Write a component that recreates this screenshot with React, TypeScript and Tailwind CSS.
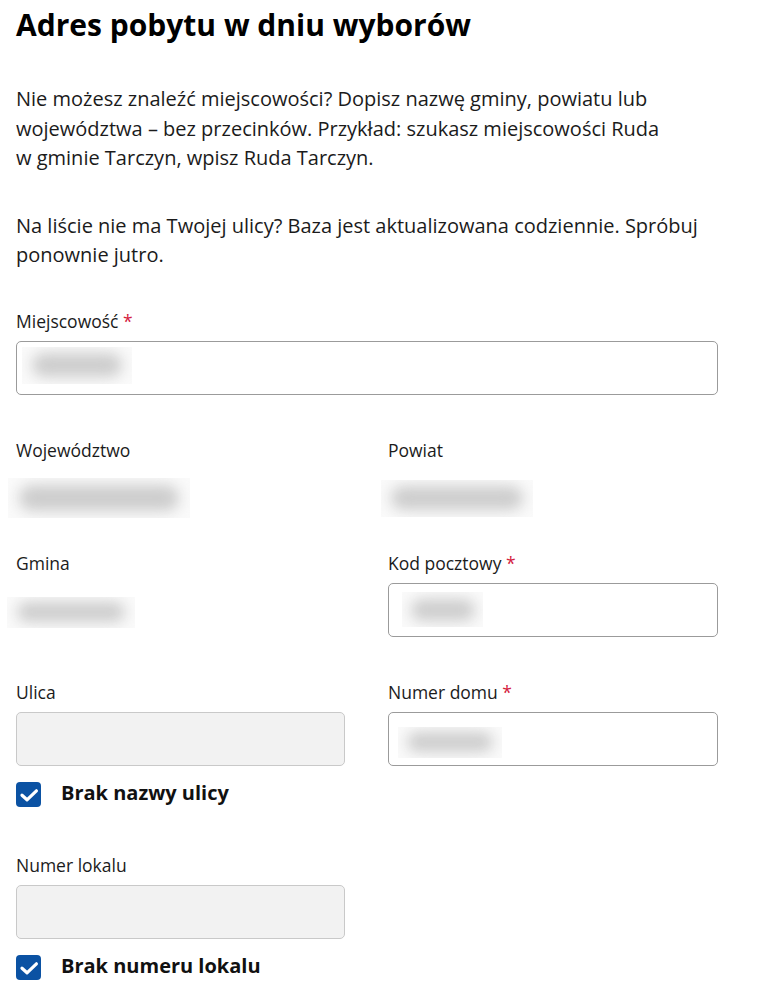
import type { ReactNode } from "react";

function Required() {
  return <span className="text-[#d4213d]"> *</span>;
}

function Label({ children }: { children: ReactNode }) {
  return <p className="text-[17.5px] leading-[24px] text-[#1b1b1b]">{children}</p>;
}

// redacted value, drawn as a soft grey smudge
function Blob({ w, h, pill }: { w: number; h: number; pill: string }) {
  return (
    <div className="flex items-center justify-center overflow-hidden bg-[#fafafa]" style={{ width: w, height: h }}>
      <div className={`rounded-full bg-[#cdcdcd] blur-[7px] ${pill}`} />
    </div>
  );
}

function TextInput({ children }: { children?: ReactNode }) {
  return (
    <div className="mt-[8px] flex h-[54px] items-center rounded-[5px] border border-[#9b9b9b] bg-white">
      {children}
    </div>
  );
}

function DisabledInput() {
  return <div className="mt-[8px] h-[54px] rounded-[5px] border border-[#c9c9c9] bg-[#f2f2f2]" />;
}

function Checked({ label }: { label: string }) {
  return (
    <div className="mt-[14px] flex items-start gap-[20px]">
      <span className="mt-[2px] flex h-[25px] w-[25px] shrink-0 rounded-[4px] bg-[#0b52a3]">
        <svg viewBox="0 0 25 25" className="h-[25px] w-[25px]" fill="none">
          <path d="M6 13.2l5 4.6 9.4-9" stroke="white" strokeWidth="3.2" strokeLinecap="round" strokeLinejoin="round" />
        </svg>
      </span>
      <span className="text-[20px] font-bold leading-[25px] text-[#111]">{label}</span>
    </div>
  );
}

export default function App() {
  return (
    <main
      className="min-h-screen bg-white px-4 pt-[7px] text-[#1b1b1b]"
      style={{ fontFamily: '"Open Sans", "Noto Sans", Arial, sans-serif' }}
    >
      <div className="w-[702px]">
        <h1 className="text-[30px] font-bold leading-[36px] text-black">Adres pobytu w dniu wyborów</h1>

        <p className="mt-[41px] text-[20px] leading-[29.5px]">
          Nie możesz znaleźć miejscowości? Dopisz nazwę gminy, powiatu lub województwa – bez przecinków. Przykład:
          szukasz miejscowości Ruda w&nbsp;gminie Tarczyn, wpisz Ruda Tarczyn.
        </p>
        <p className="mt-[38px] text-[20px] leading-[29px]">
          Na liście nie ma Twojej ulicy? Baza jest aktualizowana codziennie. Spróbuj ponownie jutro.
        </p>

        <div className="mt-[40px]">
          <Label>
            Miejscowość
            <Required />
          </Label>
          <TextInput>
            <div className="ml-[5px] -mt-[5px]">
              <Blob w={110} h={37} pill="h-[24px] w-[90px]" />
            </div>
          </TextInput>
        </div>

        <div className="mt-[43px] grid grid-cols-[329px_330px] gap-x-[43px] gap-y-[43px]">
          <div>
            <Label>Województwo</Label>
            <div className="mt-[16px] -ml-[8px] h-[30px]">
              <Blob w={182} h={40} pill="h-[26px] w-[160px]" />
            </div>
          </div>
          <div>
            <Label>Powiat</Label>
            <div className="mt-[18px] -ml-[7px] h-[28px]">
              <Blob w={152} h={37} pill="h-[24px] w-[132px]" />
            </div>
          </div>

          <div>
            <Label>Gmina</Label>
            <div className="mt-[22px] -ml-[9px]">
              <Blob w={128} h={31} pill="h-[20px] w-[108px]" />
            </div>
          </div>
          <div>
            <Label>
              Kod pocztowy
              <Required />
            </Label>
            <TextInput>
              <div className="ml-[13px]">
                <Blob w={81} h={35} pill="h-[22px] w-[64px]" />
              </div>
            </TextInput>
          </div>

          <div>
            <Label>Ulica</Label>
            <DisabledInput />
            <Checked label="Brak nazwy ulicy" />
          </div>
          <div>
            <Label>
              Numer domu
              <Required />
            </Label>
            <TextInput>
              <div className="ml-[9px] mt-[7px]">
                <Blob w={104} h={31} pill="h-[20px] w-[86px]" />
              </div>
            </TextInput>
          </div>
        </div>

        <div className="mt-[46px] w-[329px]">
          <Label>Numer lokalu</Label>
          <DisabledInput />
          <Checked label="Brak numeru lokalu" />
        </div>
      </div>
    </main>
  );
}
